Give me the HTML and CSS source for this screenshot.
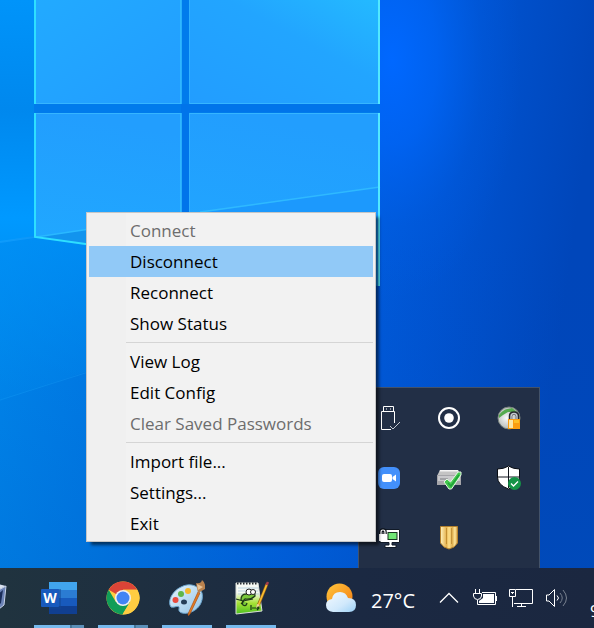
FILE: index.html
```html
<!DOCTYPE html>
<html lang="en">
<head>
<meta charset="utf-8">
<title>Desktop</title>
<link rel="stylesheet" href="styles.css">
</head>
<body>
<div class="desktop">
  <svg class="wallpaper" viewBox="0 0 594 628" preserveAspectRatio="xMinYMin slice" aria-hidden="true">
    <defs>
      <linearGradient id="base" x1="0" y1="0" x2="1" y2="0.15">
        <stop offset="0" stop-color="#008df0"/><stop offset=".3" stop-color="#0078e4"/>
        <stop offset=".6" stop-color="#005fe0"/><stop offset=".78" stop-color="#0054d2"/><stop offset="1" stop-color="#0046ba"/>
      </linearGradient>
      <linearGradient id="floor" x1="0" y1="0" x2="0" y2="1">
        <stop offset="0" stop-color="#0048b8" stop-opacity="0"/><stop offset="1" stop-color="#0058b8" stop-opacity=".28"/>
      </linearGradient>
      <radialGradient id="beam" gradientUnits="userSpaceOnUse" cx="392" cy="60" r="100" gradientTransform="translate(392 60) scale(1.3 2.4) translate(-392 -60)">
        <stop offset="0" stop-color="#0068ff"/><stop offset=".35" stop-color="#0066fa" stop-opacity=".7"/><stop offset=".7" stop-color="#0062f0" stop-opacity=".2"/><stop offset="1" stop-color="#0060f0" stop-opacity="0"/>
      </radialGradient>
      <linearGradient id="left" x1="0" y1="0" x2="0" y2="1">
        <stop offset="0" stop-color="#0094fa"/><stop offset=".45" stop-color="#0088ee"/><stop offset=".9" stop-color="#0099ff"/><stop offset="1" stop-color="#0095fa"/>
      </linearGradient>
      <linearGradient id="glow" x1="0" y1="0" x2="0" y2="1">
        <stop offset="0" stop-color="#0092f8" stop-opacity=".7"/><stop offset="1" stop-color="#0090f0" stop-opacity=".15"/>
      </linearGradient>
      <linearGradient id="pane" x1="0" y1="0" x2="1" y2="1">
        <stop offset="0" stop-color="#22aaff"/><stop offset="1" stop-color="#229dff"/>
      </linearGradient>
      <linearGradient id="paneTop" x1="0" y1="1" x2="1" y2="0">
        <stop offset="0" stop-color="#229dff"/><stop offset=".6" stop-color="#22a5ff"/><stop offset="1" stop-color="#24baff"/>
      </linearGradient>
      <linearGradient id="paneLow" x1="0.2" y1="0" x2="0" y2="1">
        <stop offset="0" stop-color="#229efe"/><stop offset="1" stop-color="#20a8ff"/>
      </linearGradient>
    </defs>
    <rect width="594" height="628" fill="url(#base)"/>
    <rect y="240" width="594" height="388" fill="url(#floor)"/>
    <rect x="250" width="344" height="310" fill="url(#beam)"/>
    <path d="M0 0H34V236L0 242Z" fill="url(#left)"/>
    <path d="M0 242L34 237L120 247V360L0 401Z" fill="url(#glow)"/>
    <path d="M0 400L120 362" stroke="#1296f2" opacity=".45"/>
    <path d="M34 0H380V240H100L34 236Z" fill="#007bec"/>
    <path d="M181 104H380V112H189V230H181Z" fill="#0074ea"/>
    <path d="M34 0H181V104H34Z" fill="url(#pane)"/>
    <path d="M189 0H380V104H189Z" fill="url(#paneTop)"/>
    <path d="M34 113H181V250L130 248L34 237Z" fill="url(#paneLow)"/>
    <path d="M189 113H380V286L189 260Z" fill="url(#paneLow)"/>
    <path d="M200 213L380 187V286L200 260Z" fill="#1c99fd"/>
    <path d="M200 212L380 187" stroke="#2fb9ff" stroke-width="1.500"/>
    <path d="M36 237L90 229V246Z" fill="#1294ee"/>
    <path d="M36 237L90 229" stroke="#2ab8ff" stroke-width="1.400"/>
    <path d="M0 242L34 237" stroke="#18a2ff" stroke-width="2" opacity=".6"/>
    <path d="M35 103.500H181M189 103.500H379M35 113.500H181M189 113.500H379" stroke="#36b5ff" fill="none"/>
    <path d="M181 0V104M181 113V230" stroke="#35bfff" stroke-width="1.500"/>
    <path d="M189.500 0V104M189.500 113V230" stroke="#2fb0ff"/>
    <path d="M35 0V104M35 113V237L100 246" stroke="#2edfff" stroke-width="2" fill="none"/>
    <path d="M379 0V104M379 113V286" stroke="#52e8ff" stroke-width="2"/>
  </svg>

  <section class="tray-flyout" aria-label="Hidden icons">
    <button class="tray-icon" aria-label="Safely remove hardware">
      <svg width="24" height="26" viewBox="0 0 24 26" fill="none" stroke="#fff"><path d="M6.500 6.500V1.500H16.500V6.500M4.500 24.500V6.500H17.500V18M4.500 24.500H14"/><path d="M9 4h1M13 4h1"/><path d="M13 21l3 3l7-7" stroke="#c4cad2"/></svg>
    </button>
    <button class="tray-icon" aria-label="Recorder">
      <svg width="24" height="24" viewBox="0 0 24 24"><circle cx="12" cy="12" r="10" fill="none" stroke="#fff" stroke-width="2"/><circle cx="12" cy="12" r="4.800" fill="#fff"/></svg>
    </button>
    <button class="tray-icon" aria-label="Network lock">
      <svg width="24" height="24" viewBox="0 0 24 24"><defs><radialGradient id="globe" cx=".4" cy=".5" r=".6"><stop offset="0" stop-color="#fafafa"/><stop offset="1" stop-color="#a7aeac"/></radialGradient></defs><circle cx="12" cy="12" r="11" fill="url(#globe)" stroke="#78827d"/><path d="M2 9C7 2 12 3 15 2L20 6L16 6L11 6L6 9L2 12Z" fill="#55aa4d"/><path d="M13.500 14V10Q13.500 7 17 7T20.500 10V14" fill="none" stroke="#26282d" stroke-width="3.500"/><path d="M14 14V10.500Q14 7.500 17 7.500T20 10.500V14" fill="none" stroke="#c2c8d0" stroke-width="1.500"/><path d="M11 13H23V23H11Z" fill="#fb9d10"/><path d="M12 14H16V22H12Z" fill="#fbe6a7"/><path d="M17 14H22V17H17Z" fill="#ffbf26"/></svg>
    </button>
    <button class="tray-icon" aria-label="Meetings">
      <svg width="22" height="22" viewBox="0 0 22 22"><rect width="22" height="22" rx="6" fill="#4390fb"/><rect x="4" y="7" width="10" height="8" rx="2" fill="#fff"/><path d="M14.500 10L18 7.500V14.500L14.500 12Z" fill="#fff"/></svg>
    </button>
    <button class="tray-icon" aria-label="Drive check">
      <svg width="26" height="24" viewBox="0 0 26 24"><path d="M4 4H22L25 10H1Z" fill="#c4c4c4"/><path d="M4 4H22L22.500 5.500H3.500Z" fill="#f4f4f4"/><path d="M1 9H25V19H1Z" fill="#a5a5a9"/><path d="M2 10H24V15H2Z" fill="#c9c9cc"/><path d="M4 13H12" stroke="#7b7c80"/><path d="M8 16L11 13L14.500 16L22 6H25V9L15.500 23H13Z" fill="#42c94d" stroke="#e5f7e5"/><path d="M12 17L15 20L23 9" fill="none" stroke="#21a13a" stroke-width="1.500"/></svg>
    </button>
    <button class="tray-icon" aria-label="Security">
      <svg width="26" height="26" viewBox="0 0 26 26"><path d="M12.500 1Q17 4 23.500 4V12Q23.500 20 12.500 24Q1.500 20 1.500 12V4Q8 4 12.500 1Z" fill="#fff" stroke="#080c12"/><path d="M12.500 2V23M2 12H23" stroke="#10151d"/><circle cx="18.500" cy="18.500" r="6.500" fill="#159447"/><path d="M15 18.500L17.500 21L22 16.500" fill="none" stroke="#fff" stroke-width="1.300"/></svg>
    </button>
    <button class="tray-icon" aria-label="VPN">
      <svg width="24" height="22" viewBox="-1 0 24 22"><path d="M3 2.500H21.500V15.500H14V18H18V20.500H7V18H11V15.500H2V8H3Z" fill="#fff" stroke="#111a27"/><rect x="10" y="5.500" width="9" height="7" fill="#70e675" stroke="#18351f"/><path d="M1 7H9V14H1Z" fill="#fff"/><path d="M3 7V5Q3 3 5 3T7 5V7" fill="none" stroke="#0b1119" stroke-width="3.500"/><path d="M3 7V5Q3 3 5 3T7 5V7" fill="none" stroke="#fff" stroke-width="1.200"/></svg>
    </button>
    <button class="tray-icon" aria-label="Shield">
      <svg width="22" height="26" viewBox="0 0 22 26"><defs><linearGradient id="gold"><stop offset="0" stop-color="#fff3c0"/><stop offset=".35" stop-color="#e5b24e"/><stop offset=".5" stop-color="#ffe08a"/><stop offset=".7" stop-color="#e0b050"/><stop offset=".85" stop-color="#ffe79c"/><stop offset="1" stop-color="#cf9436"/></linearGradient></defs><path d="M2.500 1.500H19.500V18L16 22L11 24L6 22L2.500 18Z" fill="url(#gold)" stroke="#b4812d"/><path d="M8.500 3V19M13.500 3V19" stroke="#ad7820" opacity=".6"/></svg>
    </button>
  </section>

  <nav class="menu" aria-label="Connection">
    <button class="menu-item" disabled>Connect</button>
    <button class="menu-item selected">Disconnect</button>
    <button class="menu-item">Reconnect</button>
    <button class="menu-item">Show Status</button>
    <hr class="menu-rule">
    <button class="menu-item">View Log</button>
    <button class="menu-item">Edit Config</button>
    <button class="menu-item" disabled>Clear Saved Passwords</button>
    <hr class="menu-rule">
    <button class="menu-item">Import file...</button>
    <button class="menu-item">Settings...</button>
    <button class="menu-item">Exit</button>
  </nav>

  <footer class="taskbar">
    <div class="apps">
      <button class="app cut" aria-label="Virtual machine">
        <svg width="36" height="36" viewBox="0 0 36 36"><path d="M18 2L35 6L32 25L20 34L4 27L2 8Z" fill="#16284c"/><path d="M18 2L35 6L24 12L3 8Z" fill="#dbe2ef"/><path d="M18 5L29 7L22 10L10 8Z" fill="#253863"/><path d="M24 12L35 6L33 25L23 33Z" fill="#6c83b6" stroke="#c8d3e7"/><path d="M26 15L32 10L30 23L26 27Z" fill="#1a2d59"/></svg>
      </button>
      <button class="app running stacked" aria-label="Word">
        <svg width="36" height="34" viewBox="0 0 36 34"><path d="M8 1H36V9H8Z" fill="#41a5ee"/><path d="M8 9H36V17H8Z" fill="#2b7cd3"/><path d="M8 17H36V25H8Z" fill="#185abd"/><path d="M8 25H36V33H8Z" fill="#103f91"/><path d="M8 8H20V28H8Z" fill="#124692" opacity=".5"/><rect y="8" width="18" height="18" rx="1" fill="#185abd"/><text class="glyph" x="9" y="22" text-anchor="middle">W</text></svg>
      </button>
      <button class="app running stacked" aria-label="Chrome">
        <svg width="34" height="34" viewBox="0 0 34 34"><circle cx="17" cy="17" r="16.500" fill="#ffcd42"/><path d="M17 17L2.700 8.800A16.500 16.500 0 0 1 31.300 8.800H17Z" fill="#db4437"/><path d="M2.700 8.800A16.500 16.500 0 0 0 16.500 33.500L24 21L17 17L9.900 21Z" fill="#109d58"/><path d="M17 8.800H31.300A16.500 16.500 0 0 1 16.500 33.500L24.100 21Z" fill="#ffcd42"/><circle cx="17" cy="17" r="8" fill="#f1f1f1"/><circle cx="17" cy="17" r="6.500" fill="#4285f4"/></svg>
      </button>
      <button class="app running" aria-label="Paint">
        <svg width="36" height="36" viewBox="0 0 36 36"><defs><linearGradient id="palette" x1="0" y1="0" x2="1" y2="1"><stop offset="0" stop-color="#e6f4fd"/><stop offset="1" stop-color="#92c4e6"/></linearGradient></defs><path d="M12 7C21 2 30 6 33 13C35 22 29 31 19 33C15 34 9 33 10 29C11 24 6 28 2 27C-2 22 3 11 12 7Z" fill="url(#palette)" stroke="#6aa4cd"/><ellipse cx="15" cy="22" rx="3" ry="2.500" fill="#263f58"/><circle cx="6.500" cy="20" r="3" fill="#ea4b3e"/><circle cx="12" cy="14" r="3" fill="#5fb649"/><circle cx="19" cy="11" r="3" fill="#f5b62d"/><path d="M19 34L29 12L31 13L21 34Q19 37 19 34Z" fill="#e57c20" stroke="#a65019" stroke-width=".7"/><path d="M29 13L27 3Q32 4 33 0Q37 3 36 9Z" fill="#b9824e"/><path d="M29 10L28 4L34 7Z" fill="#e7c294"/></svg>
      </button>
      <button class="app running" aria-label="Text editor">
        <svg width="36" height="36" viewBox="0 0 36 36"><defs><linearGradient id="note" x1="0" y1="0" x2="0" y2="1"><stop offset=".3" stop-color="#f7faf5"/><stop offset=".65" stop-color="#a7e236"/><stop offset="1" stop-color="#4bc01f"/></linearGradient></defs><path d="M3 3H25L29 31L3 34Z" fill="url(#note)" stroke="#d9ded8"/><path d="M4 3.500H25" stroke="#252b31" stroke-width="2" stroke-dasharray="1.500 1.500"/><path d="M5 8H25M5 11H25M5 14H26" stroke="#bad3df"/><path d="M8 20Q8 14 13 14L17 11Q22 10 22 16Q18 20 12 19Q8 22 10 25Q13 27 14 23" fill="#79c83b" stroke="#203d18" stroke-width="1.300"/><circle cx="16" cy="12" r="3" fill="#fff" stroke="#222"/><circle cx="20" cy="12" r="2.500" fill="#fff" stroke="#222"/><path d="M3 19L10 21L20 19M18 25V30M19 28H26M24 26L26 28L24 30M11 21L8 24" fill="none" stroke="#1c3517" stroke-width="1.200"/><path d="M25 26L34 4" stroke="#8d5916" stroke-width="3"/><path d="M25 26L34 4" stroke="#f7bd31" stroke-width="1.800"/><path d="M33.500 5L35 2" stroke="#a83f48" stroke-width="2.500"/><path d="M23 28L24 24L27 25Z" fill="#efd4a0"/></svg>
      </button>
    </div>
    <div class="status">
      <button class="weather" aria-label="Weather, 27 degrees">
        <svg width="32" height="32" viewBox="0 0 32 32"><defs><linearGradient id="sun" x1="0" y1="0" x2="1" y2="1"><stop offset="0" stop-color="#ffc63d"/><stop offset="1" stop-color="#f47b11"/></linearGradient><linearGradient id="cloud" x1="0" y1="0" x2="1" y2="1"><stop offset="0" stop-color="#f4faff"/><stop offset=".6" stop-color="#d1e9fc"/><stop offset="1" stop-color="#9bd0f6"/></linearGradient></defs><circle cx="14.500" cy="14.500" r="13" fill="url(#sun)"/><path d="M8 30Q1 29 1 23Q1 18 7 17Q8 10 15 10Q21 10 23 16Q31 16 31 23Q31 30 24 30Z" fill="url(#cloud)"/></svg>
        <span>27°C</span>
      </button>
      <button class="sys" aria-label="Hide icons"><svg width="20" height="12" viewBox="0 0 20 12" fill="none" stroke="#fff" stroke-width="1.300"><path d="M1 10.500L10 1.500L19 10.500"/></svg></button>
      <button class="sys" aria-label="Battery"><svg width="26" height="20" viewBox="0 0 26 20" fill="none" stroke="#fff"><path d="M3.500 1V5M7.500 1V5M1.500 5.500H9.500V8Q9 11.500 5.500 11.500T1.500 8ZM5.500 12V16.500H23.500V4.500H10M24.500 8V13"/><path d="M11 6H22V15H7V13L11 10Z" fill="#fff" stroke="none"/></svg></button>
      <button class="sys" aria-label="Network"><svg width="26" height="20" viewBox="0 0 26 20" fill="none" stroke="#fff"><path d="M8 1.500H24.500V15.500H6M1.500 1.500H7.500V8.500H1.500ZM4.500 9V19M3 4.500H6M4.500 4V6M13.500 16V18M9 18.500H18"/></svg></button>
      <button class="sys" aria-label="Volume"><svg width="26" height="20" viewBox="0 0 26 20" fill="none" stroke="#fff"><path d="M2.500 7V13H5L10.500 18.500V1.500L5 7ZM13 7.500Q16 10 13 12.500"/><path d="M16 5Q20.500 10 16 15M19 2Q26 10 19 18" stroke="#78818f"/></svg></button>
      <span class="clock">9</span>
    </div>
  </footer>
</div>
</body>
</html>
```

FILE: styles.css
```css
* {
  box-sizing: border-box;
}

body {
  margin: 0;
  font-family: "Open Sans", "Noto Sans", sans-serif;
}

button {
  margin: 0;
  padding: 0;
  border: 0;
  background: none;
  color: inherit;
  font: inherit;
}

svg {
  display: block;
  flex: none;
}

.desktop {
  position: relative;
  display: flex;
  flex-direction: column;
  justify-content: flex-end;
  min-height: 100vh;
  overflow: hidden;
  background: #0058d0;
}

.wallpaper {
  position: absolute;
  inset: 0;
  width: 100%;
  height: 100%;
}

/* Popups above the taskbar */
.tray-flyout {
  position: absolute;
  right: 54px;
  bottom: 60px;
  display: grid;
  grid-template-columns: repeat(3, 60px);
  grid-auto-rows: 60px;
  border: 1px solid #42526a;
  border-bottom: 0;
  background: #222f46;
}

.tray-icon {
  display: grid;
  place-items: center;
}

.menu {
  position: absolute;
  right: 218px;
  bottom: 86px;
  display: flex;
  flex-direction: column;
  width: 290px;
  padding: 2px;
  border: 1px solid #c6c6c6;
  background: linear-gradient(to right, #f0f0f0 39px, #f2f2f2 39px);
  box-shadow: 4px 4px 3px -1px rgba(0, 0, 0, 0.55);
}

.menu-item {
  height: 31px;
  padding: 1px 0 0 41px;
  color: #000;
  font-size: 17px;
  line-height: 30px;
  text-align: left;
}

.menu-item:disabled {
  color: #6d6d6d;
}

.menu-item.selected {
  background: #91c9f7;
}

.menu-rule {
  width: calc(100% - 37px);
  height: 1px;
  margin: 3px 0 3px 37px;
  border: 0;
  background: #d5d5d5;
}

/* Taskbar */
.taskbar {
  position: relative;
  display: flex;
  justify-content: space-between;
  height: 60px;
  overflow: hidden;
  background: linear-gradient(to right, #20333f, #1b2942 60%, #1b2740);
  color: #fff;
}

.apps,
.status,
.weather {
  display: flex;
  align-items: center;
}

.app {
  position: relative;
  display: grid;
  place-items: center;
  width: 64px;
  height: 60px;
}

/* Scrolled partly past the left edge */
.app.cut {
  justify-content: end;
  width: 27px;
  padding-right: 20px;
}

.app.running::after {
  content: "";
  position: absolute;
  right: 7px;
  bottom: 0;
  left: 7px;
  height: 3px;
  background: #76b9ed;
}

.app.stacked::after {
  background: linear-gradient(to right, #76b9ed 36px, #467699 36px, #467699 38px, #5b8fb8 38px);
}

.glyph {
  fill: #fff;
  font: bold 14px "Open Sans", sans-serif;
}

.weather {
  gap: 14px;
  margin-right: 16px;
  font-size: 20px;
}

.weather span {
  padding-top: 4px;
}

.sys {
  display: grid;
  place-items: center;
  width: 36px;
  height: 60px;
}

.clock {
  width: 19px;
  padding: 26px 0 0 15px;
  font-size: 17px;
  line-height: 34px;
}
```
